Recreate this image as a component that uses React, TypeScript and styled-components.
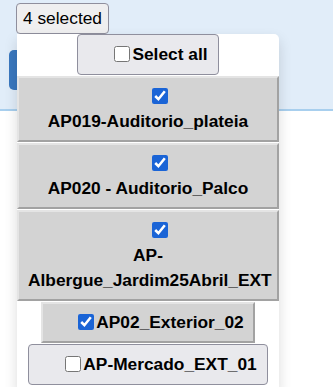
import React, { useState } from "react";
import styled, { createGlobalStyle, css } from "styled-components";

const GlobalStyle = createGlobalStyle`
  html, body {
    margin: 0;
    padding: 0;
    background: #ffffff;
    font-family: "Liberation Sans", Arial, sans-serif;
  }
`;

const Page = styled.div`
  width: 333px;
  height: 387px;
  overflow: hidden;
  background: #ffffff;
`;

const Header = styled.div`
  height: 106px;
  padding: 3px 0 0 9px;
  background: #e1edf9;
  border-bottom: 2px solid #a8cfee;
  display: flex;
  flex-direction: column;
  align-items: flex-start;
  gap: 16px;
`;

const MultiSelect = styled.div`
  position: relative;
  margin-left: 7px;
  z-index: 2;
`;

const Toggle = styled.button`
  display: block;
  height: 31px;
  padding: 4px 6px;
  border: 1px solid #8f8f9d;
  border-radius: 4px;
  background: #efeff0;
  color: #000000;
  font-family: "Liberation Sans", Arial, sans-serif;
  font-size: 17.33px;
  line-height: 21px;
  cursor: pointer;
`;

const Dropdown = styled.div`
  position: absolute;
  top: 100%;
  left: 1px;
  width: 262px;
  height: 360px;
  background: #ffffff;
  border-radius: 0 5px 0 0;
  box-shadow: 0 6px 14px rgba(0, 0, 0, 0.14);
  display: flex;
  flex-direction: column;
  align-items: center;
  gap: 1px;
`;

const Option = styled.label<{ $checked: boolean }>`
  box-sizing: border-box;
  display: block;
  max-width: 100%;
  text-align: center;
  font-size: 17.33px;
  font-weight: bold;
  line-height: 25px;
  color: #000000;
  cursor: pointer;
  ${({ $checked }) =>
    $checked
      ? css`
          padding: 6px 9px;
          background: #d3d3d3;
          border-style: solid;
          border-width: 2px;
          border-color: #e4e4e4 #a2a2a2 #a2a2a2 #e4e4e4;
        `
      : css`
          padding: 7px 10px;
          background: #e9e9ed;
          border: 1px solid #8f8f9d;
          border-radius: 4px;
        `}
`;

const Check = styled.input`
  width: 16px;
  height: 16px;
  margin: 0 2px 0 26px;
  vertical-align: -2px;
  accent-color: #1a64d6;
`;

const Name = styled.span`
  display: inline-block;
  max-width: 100%;
`;

const ActionButton = styled.div`
  width: 60px;
  height: 40px;
  border-radius: 5px;
  background: #3a78bf;
`;

const initial = [
  { id: "AP019", label: "AP019-Auditorio_plateia", checked: true },
  { id: "AP020", label: "AP020 - Auditorio_Palco", checked: true },
  { id: "AP-ALB", label: "AP-Albergue_Jardim25Abril_EXT", checked: true },
  { id: "AP02", label: "AP02_Exterior_02", checked: true },
  { id: "AP-MER", label: "AP-Mercado_EXT_01", checked: false },
];

export default function App() {
  const [items, setItems] = useState(initial);
  const count = items.filter((i) => i.checked).length;
  const allChecked = count === items.length;

  const toggle = (id: string) =>
    setItems((prev) =>
      prev.map((i) => (i.id === id ? { ...i, checked: !i.checked } : i))
    );

  const toggleAll = () =>
    setItems((prev) => prev.map((i) => ({ ...i, checked: !allChecked })));

  return (
    <Page>
      <GlobalStyle />
      <Header>
        <MultiSelect>
          <Toggle>{count} selected</Toggle>
          <Dropdown>
            <Option $checked={false}>
              <Check type="checkbox" checked={allChecked} onChange={toggleAll} />
              <Name>Select all</Name>
            </Option>
            {items.map((item) => (
              <Option key={item.id} $checked={item.checked}>
                <Check
                  type="checkbox"
                  checked={item.checked}
                  onChange={() => toggle(item.id)}
                />
                <Name>{item.label}</Name>
              </Option>
            ))}
          </Dropdown>
        </MultiSelect>
        <ActionButton />
      </Header>
    </Page>
  );
}
